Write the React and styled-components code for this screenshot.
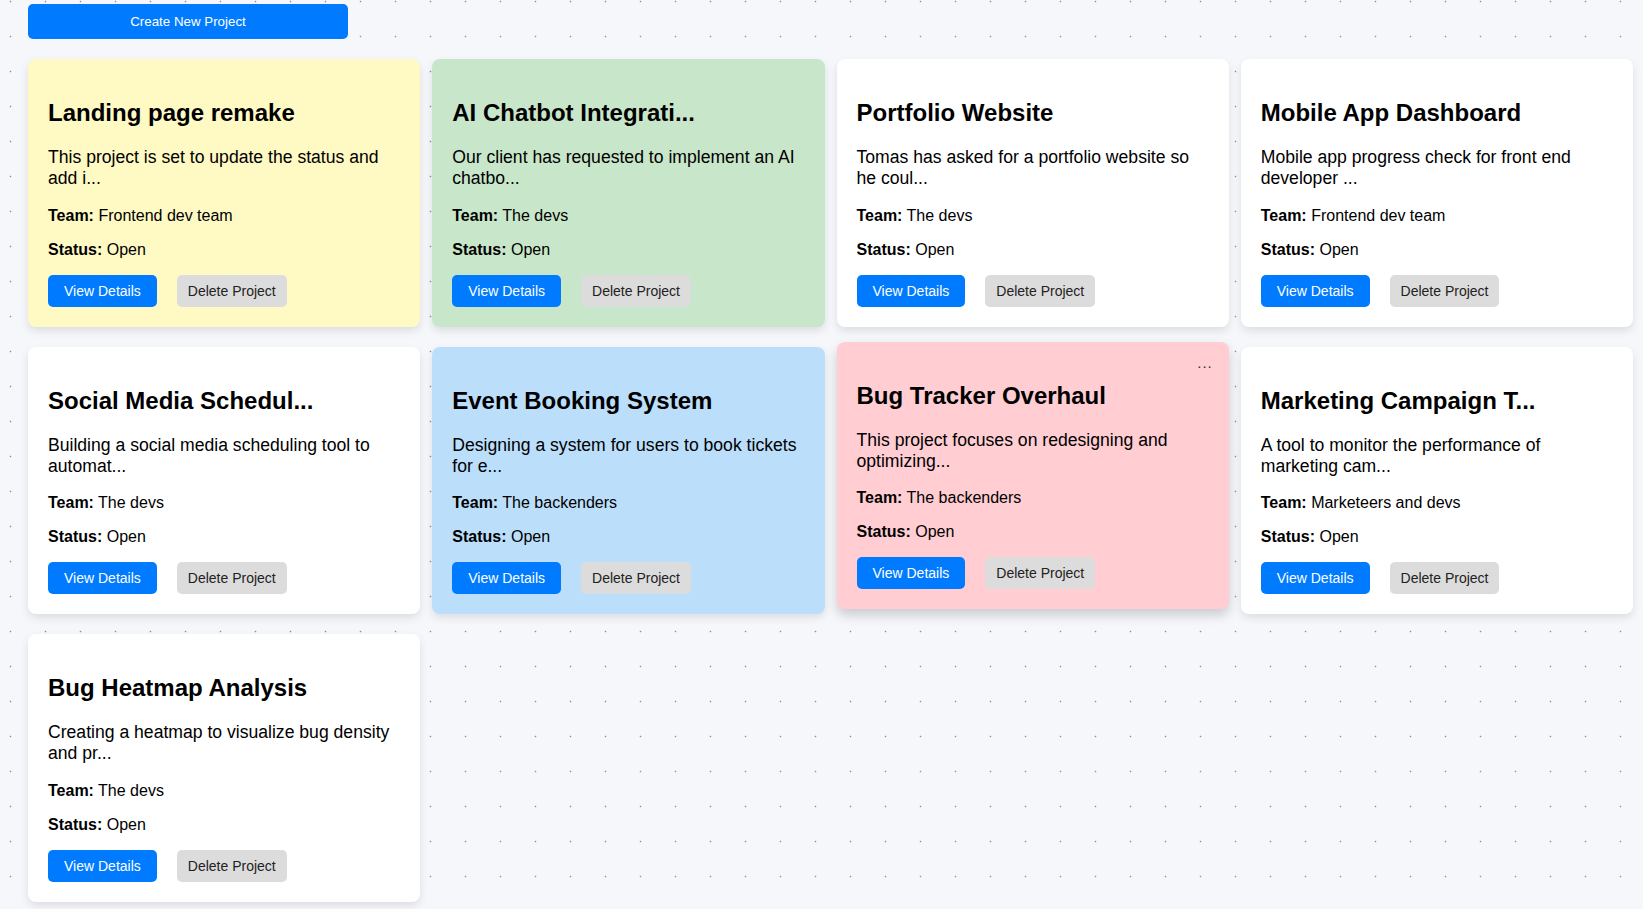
import React from 'react';
import styled, { createGlobalStyle, css } from 'styled-components';

const GlobalStyle = createGlobalStyle`
  html, body {
    margin: 0;
    padding: 0;
  }
  body {
    font-family: "Liberation Sans", Arial, sans-serif;
    color: #000;
    background-color: #f6f7fb;
    background-image: radial-gradient(circle, #8d929c 0.7px, transparent 1.1px);
    background-size: 35px 35px;
    background-position: -7px -16px;
    min-height: 909px;
  }
`;

const Page = styled.div`
  padding: 4px 10px 20px 28px;
`;

const CreateButton = styled.button`
  display: block;
  width: 320px;
  height: 35px;
  border: none;
  border-radius: 5px;
  background: #007bff;
  color: #fff;
  font-family: inherit;
  font-size: 13.333px;
  cursor: pointer;
`;

const Grid = styled.div`
  display: grid;
  grid-template-columns: repeat(4, 1fr);
  column-gap: 12px;
  row-gap: 20px;
  margin-top: 20px;
`;

const Card = styled.div`
  position: relative;
  padding: 20px;
  border-radius: 8px;
  background: ${p => p.color || '#fff'};
  box-shadow: 0 4px 8px rgba(0, 0, 0, 0.1);
  transition: transform 0.2s;
  ${p => p.hovered && css`
    transform: translateY(-5px);
    box-shadow: 0 6px 12px rgba(0, 0, 0, 0.18);
  `}
`;

const MenuDots = styled.span`
  position: absolute;
  top: 12px;
  right: 16px;
  font-size: 15px;
  letter-spacing: 1px;
  color: #333;
`;

const Title = styled.h2`
  font-size: 24px;
  font-weight: bold;
  margin: 20px 0;
`;

const Description = styled.p`
  font-size: 17.6px;
  margin: 17.6px 0;
`;

const Info = styled.p`
  font-size: 16px;
  margin: 16px 0;
`;

const Actions = styled.div`
  display: flex;
  gap: 20px;
`;

const ActionButton = styled.button`
  padding: ${p => (p.primary ? '8px 16px' : '8px 11px')};
  border: none;
  border-radius: 5px;
  font-family: inherit;
  font-size: 14px;
  cursor: pointer;
  background: ${p => (p.primary ? '#007bff' : '#dcdcdc')};
  color: ${p => (p.primary ? '#fff' : '#222')};
`;

const projects = [
  { title: 'Landing page remake', desc: 'This project is set to update the status and add i...', team: 'Frontend dev team', color: '#fff9c4' },
  { title: 'AI Chatbot Integrati...', desc: 'Our client has requested to implement an AI chatbo...', team: 'The devs', color: '#c8e6c9' },
  { title: 'Portfolio Website', desc: 'Tomas has asked for a portfolio website so he coul...', team: 'The devs' },
  { title: 'Mobile App Dashboard', desc: 'Mobile app progress check for front end developer ...', team: 'Frontend dev team' },
  { title: 'Social Media Schedul...', desc: 'Building a social media scheduling tool to automat...', team: 'The devs' },
  { title: 'Event Booking System', desc: 'Designing a system for users to book tickets for e...', team: 'The backenders', color: '#bbdefb' },
  { title: 'Bug Tracker Overhaul', desc: 'This project focuses on redesigning and optimizing...', team: 'The backenders', color: '#ffcdd2', hovered: true },
  { title: 'Marketing Campaign T...', desc: 'A tool to monitor the performance of marketing cam...', team: 'Marketeers and devs' },
  { title: 'Bug Heatmap Analysis', desc: 'Creating a heatmap to visualize bug density and pr...', team: 'The devs' },
];

function ProjectCard({ project }) {
  return (
    <Card color={project.color} hovered={project.hovered}>
      {project.hovered && <MenuDots>...</MenuDots>}
      <Title>{project.title}</Title>
      <Description>{project.desc}</Description>
      <Info><strong>Team:</strong> {project.team}</Info>
      <Info><strong>Status:</strong> Open</Info>
      <Actions>
        <ActionButton primary>View Details</ActionButton>
        <ActionButton>Delete Project</ActionButton>
      </Actions>
    </Card>
  );
}

export default function App() {
  return (
    <>
      <GlobalStyle />
      <Page>
        <CreateButton>Create New Project</CreateButton>
        <Grid>
          {projects.map(p => (
            <ProjectCard key={p.title} project={p} />
          ))}
        </Grid>
      </Page>
    </>
  );
}
